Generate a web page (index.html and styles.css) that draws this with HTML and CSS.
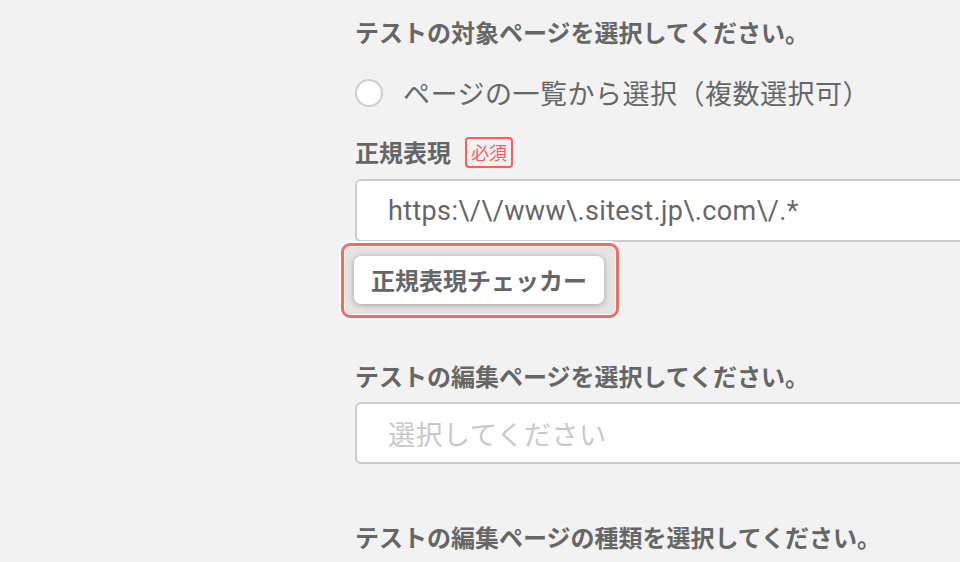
FILE: index.html
```html
<!DOCTYPE html>
<html lang="ja">
<head>
<meta charset="utf-8">
<title>テスト設定</title>
<link rel="stylesheet" href="styles.css">
</head>
<body>
<main class="form">
  <h2 class="heading">テストの対象ページを選択してください。</h2>
  <label class="radio-row">
    <span class="radio"></span>
    <span class="radio-label">ページの一覧から選択（複数選択可）</span>
  </label>
  <div class="field-label">
    <span>正規表現</span>
    <span class="badge">必須</span>
  </div>
  <div class="input">https:\/\/www\.sitest.jp\.com\/.*</div>
  <div class="focus-ring">
    <button class="btn" type="button">正規表現チェッカー</button>
  </div>
  <h2 class="heading heading-2">テストの編集ページを選択してください。</h2>
  <div class="input select"><span class="placeholder">選択してください</span></div>
  <h2 class="heading heading-3">テストの編集ページの種類を選択してください。</h2>
</main>
</body>
</html>
```
FILE: styles.css
```css
html, body {
  margin: 0;
  padding: 0;
  overflow: hidden;
  background: #f2f2f2;
}
body {
  font-family: "Noto Sans CJK JP", "Noto Sans", sans-serif;
  color: #666;
}
.form {
  padding: 14px 0 0 355px;
  display: flex;
  flex-direction: column;
  align-items: flex-start;
}
.heading {
  margin: 0;
  font-size: 24px;
  line-height: 36px;
  font-weight: 700;
  color: #666;
  white-space: nowrap;
}
.radio-row {
  margin-top: 23px;
  height: 40px;
  display: flex;
  align-items: center;
  gap: 20px;
}
.radio {
  width: 24px;
  height: 24px;
  border: 2px solid #cfcfcf;
  border-radius: 50%;
  background: #fff;
  flex: none;
}
.radio-label {
  font-size: 27px;
  letter-spacing: 0.5px;
  line-height: 40px;
  white-space: nowrap;
}
.field-label {
  margin-top: 23px;
  height: 32px;
  display: flex;
  align-items: center;
  gap: 14px;
  font-size: 24px;
  font-weight: 700;
  line-height: 32px;
}
.badge {
  box-sizing: border-box;
  height: 31px;
  padding: 0 4px;
  border: 2px solid #ff5b5b;
  border-radius: 4px;
  color: #ff5b5b;
  font-size: 18px;
  font-weight: 400;
  line-height: 27px;
}
.input {
  box-sizing: border-box;
  margin-top: 11px;
  width: 620px;
  height: 63px;
  padding: 0 0 0 31px;
  border: 2px solid #cccccc;
  border-radius: 6px;
  background: #fff;
  display: flex;
  align-items: center;
  font-family: Roboto, "Noto Sans CJK JP", sans-serif;
  font-size: 27px;
  letter-spacing: 0.35px;
  color: #666;
  white-space: nowrap;
}
.focus-ring {
  margin: 1px 0 0 -14px;
  padding: 10px 12px 11px 10px;
  border: 3px solid #f36c62;
  border-radius: 9px;
  background: #e4e4e4;
  box-shadow: 0 0 0 2px #fff, inset 0 0 0 1px #f7f7f7;
  display: flex;
}
.btn {
  width: 250px;
  height: 48px;
  padding: 0;
  border: 0;
  border-radius: 7px;
  background: #fff;
  box-shadow: 0 1px 6px rgba(0, 0, 0, 0.3);
  font-family: "Noto Sans CJK JP", sans-serif;
  font-size: 24px;
  font-weight: 700;
  color: #666;
  line-height: 48px;
}
.heading-2 {
  margin-top: 40px;
}
.select {
  margin-top: 8px;
  height: 62px;
  font-family: "Noto Sans CJK JP", sans-serif;
  letter-spacing: 0.5px;
}
.placeholder {
  color: #c8c8c8;
}
.heading-3 {
  margin-top: 55px;
}
```
